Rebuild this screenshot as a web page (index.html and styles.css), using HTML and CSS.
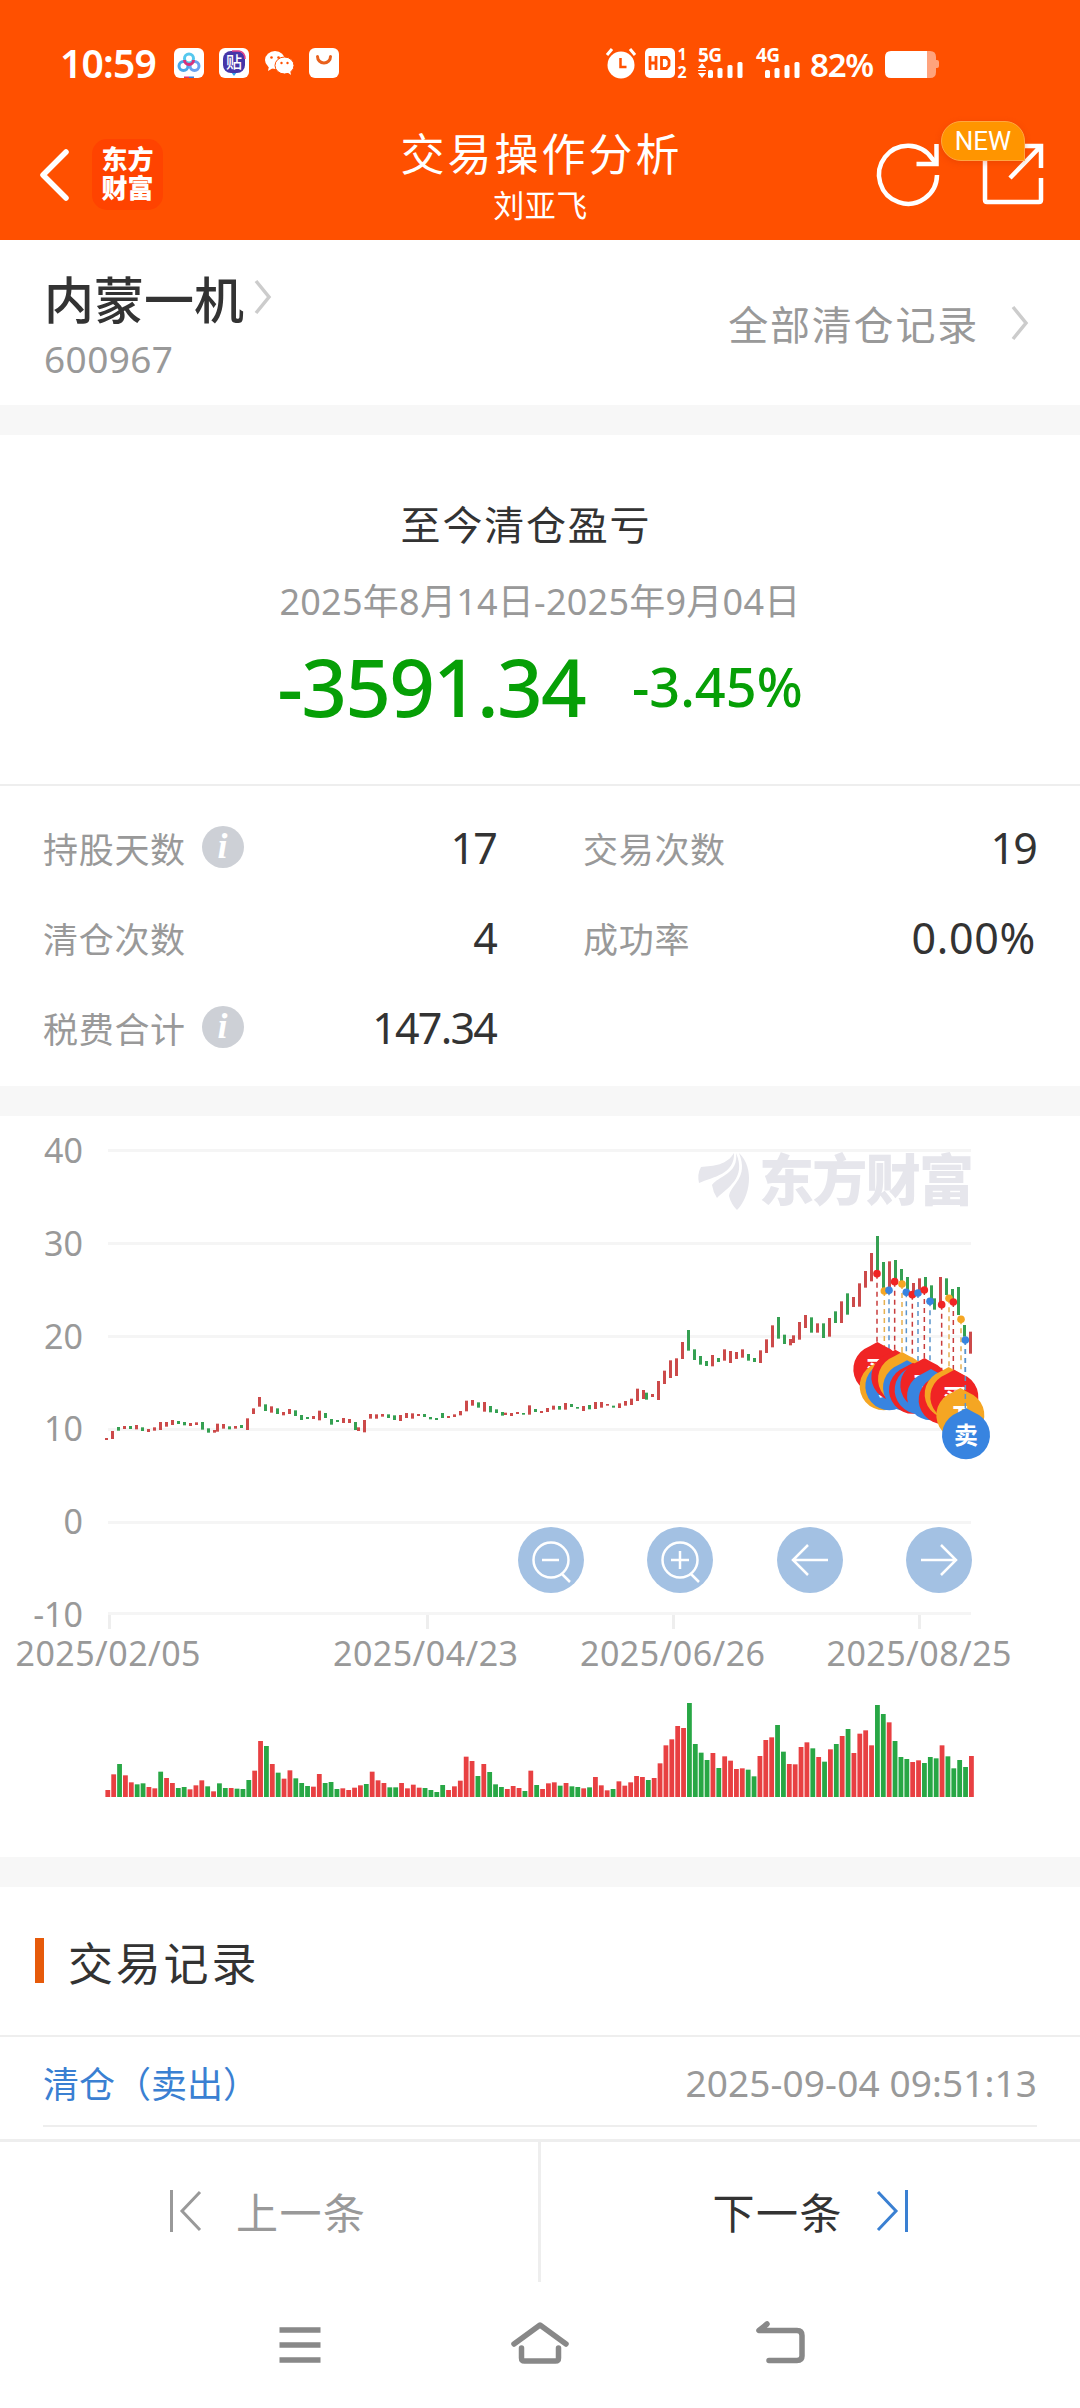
FILE: index.html
```
<!DOCTYPE html>
<html lang="zh-CN">
<head>
  <meta charset="UTF-8" />
  <meta name="viewport" content="width=device-width, initial-scale=1.0" />
  <title>交易操作分析</title>
  <link rel="stylesheet" href="styles.css">
</head>
<body>
  <header class="header">
    <div class="status">
      <span class="time">10:59</span>
      <svg class="apps" width="166" height="32" viewBox="0 0 166 32">
        <rect x="0" y="1" width="30" height="30" rx="6" fill="#fff"/>
        <g fill="none" stroke-width="3">
          <circle cx="9.500" cy="19" r="4.500" stroke="#4aa8e8"/>
          <circle cx="20.500" cy="19" r="4.500" stroke="#6aa2ee"/>
          <circle cx="15" cy="11.500" r="4.500" stroke="#55c8ee"/>
          <path d="M10.500 13a4.500 4.500 0 0 0 9 0" stroke="#d8327a"/>
        </g>
        <path d="M10 29.500h5v1.500h-5z" fill="#e0356a"/><path d="M15 29.500h5v1.500h-5z" fill="#3b7bd8"/>
        <rect x="45" y="1" width="30" height="30" rx="6" fill="#fff"/>
        <path d="M57 25h6l-3 4z" fill="#2da0ee"/>
        <rect x="49" y="4" width="22" height="22" rx="8" fill="#4636a8"/>
        <path d="M58 4h7q6 1 6 8" fill="none" stroke="#e0408a" stroke-width="1.500"/>
        <text x="60" y="20.500" class="tie">贴</text>
        <ellipse cx="101" cy="13" rx="10" ry="9" fill="#fff"/>
        <path d="M95 19l-1 5 5-3z" fill="#fff"/>
        <ellipse cx="110.500" cy="18.500" rx="9.500" ry="8.500" fill="#fff" stroke="#ff5000"/>
        <path d="M113 25l4 3-1-5z" fill="#fff"/>
        <g fill="#ff5000"><circle cx="97.500" cy="10.500" r="1.300"/><circle cx="104.500" cy="10.500" r="1.300"/><circle cx="107.500" cy="16" r="1.200"/><circle cx="113.500" cy="16" r="1.200"/></g>
        <rect x="135" y="1" width="30" height="30" rx="6" fill="#fff"/>
        <path d="M143.500 9.500a6.500 6.500 0 0 0 13 0" fill="none" stroke="#e8601c" stroke-width="3" stroke-linecap="round"/>
      </svg>
      <svg class="signals" width="200" height="32" viewBox="0 0 200 32">
        <g fill="#fff">
          <circle cx="15" cy="18" r="13.500"/>
          <path d="M1 8l5-6M29 8l-5-6" stroke="#fff" stroke-width="3"/>
          <path d="M14.500 11v9h6" fill="none" stroke="#ff5000" stroke-width="2.500"/>
          <rect x="39" y="1" width="30" height="30" rx="5"/>
          <path d="M44 9v14M50 9v14M44 16h6M55.500 10.500h5l2.500 3v5l-2.500 3h-5z" fill="none" stroke="#ff5000" stroke-width="2.800"/>
          <text x="76" y="13" class="sim">1</text>
          <text x="76" y="31" class="sim">2</text>
          <text x="92" y="15" class="net">5G</text>
          <path d="M96 16l4 5h-8zM96 31l-4-5h8z"/>
          <path d="M92 23.500h8" stroke="#fff"/>
          <rect x="102" y="23" width="5" height="8" rx="1.500"/><rect x="111.500" y="21" width="5" height="10" rx="1.500"/><rect x="121.500" y="18" width="5" height="13" rx="1.500"/><rect x="131.500" y="15" width="5" height="16" rx="1.500"/>
          <text x="150" y="15" class="net">4G</text>
          <rect x="159" y="23" width="5" height="8" rx="1.500"/><rect x="168.500" y="21" width="5" height="10" rx="1.500"/><rect x="178.500" y="18" width="5" height="13" rx="1.500"/><rect x="188.500" y="15" width="5" height="16" rx="1.500"/>
        </g>
      </svg>
      <span class="percent">82%</span>
      <svg width="54" height="32" viewBox="0 0 54 32">
        <path d="M42 4h3q6 0 6 6v3h1q2 0 2 2v4q0 2-2 2h-1v4q0 6-6 6h-3z" fill="#ffa37c"/>
        <path d="M42 4H6Q0 4 0 10v15q0 6 6 6h36z" fill="#fff"/>
      </svg>
    </div>

    <div class="nav">
      <div class="nav-side">
        <svg width="32" height="54" viewBox="0 0 32 54"><path d="M28 4L5 27l23 23" fill="none" stroke="#fff" stroke-width="5.500" stroke-linecap="round" stroke-linejoin="round"/></svg>
        <div class="logo">东方<br>财富</div>
      </div>
      <div class="nav-title">
        <h1>交易操作分析</h1>
        <p>刘亚飞</p>
      </div>
      <div class="nav-side nav-right">
        <svg width="66" height="66" viewBox="0 0 66 66" fill="none" stroke="#fff" stroke-width="4.500"><path d="M62 34A29 29 0 1 1 57 17.500L61 22"/><path d="M61.500 3v20H41.500"/></svg>
        <div class="share">
          <svg width="64" height="64" viewBox="0 0 64 64" fill="none" stroke="#fff" stroke-width="4.500"><path d="M28 4H4v54q0 2 2 2h52q2 0 2-2V36"/><path d="M42 4h18v22M59 5L29 36"/></svg>
          <span class="badge">NEW</span>
        </div>
      </div>
    </div>
  </header>

  <section class="stock">
    <div>
      <div class="stock-name">内蒙一机<svg width="20" height="38" viewBox="0 0 20 38"><path d="M3 3l13 16L3 35" fill="none" stroke="#ccc" stroke-width="3.500"/></svg></div>
      <div class="stock-code">600967</div>
    </div>
    <div class="all-records">全部清仓记录<svg width="20" height="38" viewBox="0 0 20 38"><path d="M3 3l13 16L3 35" fill="none" stroke="#ccc" stroke-width="3.500"/></svg></div>
  </section>

  <section class="profit">
    <h2>至今清仓盈亏</h2>
    <p class="range">2025年8月14日-2025年9月04日</p>
    <div class="amount"><span class="money">-3591.34</span><span class="rate">-3.45%</span></div>
  </section>

  <section class="stats">
    <div class="stat"><span>持股天数</span><i class="info">i</i><b>17</b></div>
    <div class="stat"><span>交易次数</span><b>19</b></div>
    <div class="stat"><span>清仓次数</span><b>4</b></div>
    <div class="stat"><span>成功率</span><b class="ratio">0.00%</b></div>
    <div class="stat"><span>税费合计</span><i class="info">i</i><b>147.34</b></div>
  </section>

  <section class="chart">
    <svg id="chart" width="1080" height="741" viewBox="0 0 1080 741">
      <g class="grid"><path d="M108 34.500h863M108 127.500h863M108 220.500h863M108 313.500h863M108 406.500h863M108 497.500h863"/></g>
      <path class="ticks" d="M109.500 499v14M427.500 499v14M673.500 499v14M919.500 499v14"/>
      <g class="axis axis-y">
        <text x="83" y="47">40</text>
        <text x="83" y="140">30</text>
        <text x="83" y="233">20</text>
        <text x="83" y="325">10</text>
        <text x="83" y="418">0</text>
        <text x="83" y="511">-10</text>
      </g>
      <g class="axis axis-x">
        <text x="108" y="550" textLength="185">2025/02/05</text>
        <text x="425.500" y="550" textLength="185">2025/04/23</text>
        <text x="672.500" y="550" textLength="185">2025/06/26</text>
        <text x="919" y="550" textLength="185">2025/08/25</text>
      </g>
      <g class="watermark">
        <path d="M734 37C727 49 714 50 701 51Q697 58 699 67C713 61 735 58 734 37z"/>
        <path d="M736 37C739 58 718 60 712 69Q713 76 717 82C727 72 747 62 736 37z"/>
        <path d="M739 37C749 62 731 68 729 80Q731 88 737 94C750 81 755 52 739 37z"/>
        <text x="759" y="84" textLength="215">东方财富</text>
      </g>
      <g id="candles"></g>
      <g id="volumes"></g>
      <g id="marks"></g>
      <g class="tools">
        <circle cx="551" cy="444" r="33"/><circle cx="680" cy="444" r="33"/><circle cx="810" cy="444" r="33"/><circle cx="939" cy="444" r="33"/>
        <path d="M568.500 444a17.500 17.500 0 1 1-35 0a17.500 17.500 0 1 1 35 0M542 444h17M562 458l8 8"/>
        <path d="M697.500 444a17.500 17.500 0 1 1-35 0a17.500 17.500 0 1 1 35 0M671 444h18M680 435v18M691 458l8 8"/>
        <path d="M828 444h-34M808 429l-15 15 15 15"/>
        <path d="M921 444h34M941 429l15 15-15 15"/>
      </g>
    </svg>
  </section>

  <section class="records">
    <h2>交易记录</h2>
    <div class="record"><a>清仓（卖出）</a><time>2025-09-04 09:51:13</time></div>
  </section>

  <footer>
    <div class="pager">
      <div class="prev"><svg width="34" height="44" viewBox="0 0 34 44"><path d="M3.500 1v42M32 3L14 22l18 19" fill="none" stroke="#999" stroke-width="3"/></svg><span>上一条</span></div>
      <div class="next"><span>下一条</span><svg width="34" height="44" viewBox="0 0 34 44"><path d="M30.500 1v42M2 3l18 19L2 41" fill="none" stroke="#3a80d2" stroke-width="3"/></svg></div>
    </div>
    <div class="keys">
      <svg width="60" height="50" viewBox="0 0 60 50"><path d="M9.500 10h41M9.500 25h41M9.500 40h41" /></svg>
      <svg width="60" height="50" viewBox="0 0 60 50"><path d="M4 24L30 5l26 19M11.500 28v10q0 3 3 3h31q3 0 3-3V28"/></svg>
      <svg width="60" height="50" viewBox="0 0 60 50"><path d="M17 4L9 10.500h38q5 0 5 5V36q0 4.500-5 4.500H19"/></svg>
    </div>
  </footer>

  <script src="chart.js"></script>
</body>
</html>
```

FILE: styles.css
```
* {
  box-sizing: border-box;
}
body {
  margin: 0;
  width: 1080px;
  height: 2408px;
  overflow: hidden;
  display: flex;
  flex-direction: column;
  background: #fff;
  color: #333;
  font-family: "Noto Sans", "Noto Sans CJK SC", sans-serif;
}
h1, h2, p {
  margin: 0;
  font-weight: 400;
}
svg {
  display: block;
  flex: none;
  overflow: visible;
}

.header {
  height: 240px;
  background: #ff5000;
  color: #fff;
}
.status {
  display: flex;
  align-items: center;
  height: 95px;
  padding: 31px 0 0 60px;
}
.time {
  width: 114px;
  font-size: 39px;
  font-weight: 600;
  letter-spacing: -0.8px;
  line-height: 60px;
}
.signals {
  margin-left: 266px;
}
.percent {
  width: 79px;
  padding: 4px 0 0 4px;
  font-size: 33px;
  font-weight: 600;
  letter-spacing: -1.2px;
  line-height: 60px;
}
.tie {
  font: 500 16px "Noto Sans CJK SC", sans-serif;
  fill: #fff;
  text-anchor: middle;
}
.sim {
  font: 700 16px "Noto Sans", sans-serif;
  text-anchor: middle;
}
.net {
  font: 700 19px "Noto Sans", sans-serif;
  letter-spacing: -0.5px;
}

.nav {
  display: flex;
  justify-content: space-between;
  height: 145px;
  padding: 26px 35px 0 38px;
}
.nav-side {
  display: flex;
  width: 240px;
  padding-top: 18px;
}
.nav-side > svg {
  margin-top: 9px;
}
.logo {
  width: 71px;
  height: 71px;
  margin-left: 22px;
  padding-top: 6px;
  border-radius: 15px;
  background: #ff4300;
  font-size: 26px;
  font-weight: 900;
  line-height: 29px;
  text-align: center;
}
.nav-title {
  text-align: center;
}
.nav-title h1 {
  padding-top: 4px;
  font-size: 44px;
  letter-spacing: 3px;
  line-height: 58px;
}
.nav-title p {
  padding: 1px 2px 0 0;
  font-size: 31px;
  letter-spacing: 0.5px;
  line-height: 43px;
}
.nav-right {
  justify-content: flex-end;
}
.nav-right > svg {
  margin-top: 2px;
}
.share {
  position: relative;
  margin: 3px 0 0 40px;
}
.badge {
  position: absolute;
  left: -40px;
  top: -21px;
  width: 84px;
  height: 40px;
  border: 1px solid #ffa640;
  border-radius: 20px 20px 0 20px;
  background: #ff9500;
  font: 26px/38px Roboto, sans-serif;
  text-align: center;
  box-shadow: 0 2px 6px rgba(200, 50, 0, 0.3);
}

.stock {
  display: flex;
  justify-content: space-between;
  height: 195px;
  padding: 27px 50px 0 44px;
  border-bottom: 30px solid #f7f7f7;
}
.stock-name {
  display: flex;
  align-items: center;
  font-size: 50px;
  font-weight: 500;
  line-height: 66px;
}
.stock-name svg {
  margin: -6px 0 0 9px;
}
.stock-code {
  font-size: 37px;
  letter-spacing: 0.4px;
  line-height: 51px;
  color: #999;
}
.all-records {
  display: flex;
  align-items: center;
  height: 112px;
  font-size: 40px;
  letter-spacing: 1.8px;
  color: #999;
}
.all-records svg {
  margin-left: 31px;
}

.profit {
  height: 351px;
  padding-top: 60px;
  border-bottom: 2px solid #eee;
  text-align: center;
}
.profit h2 {
  padding-right: 28px;
  font-size: 40px;
  letter-spacing: 1.8px;
  line-height: 60px;
}
.range {
  padding-top: 22px;
  font-size: 36px;
  letter-spacing: 0.25px;
  line-height: 50px;
  color: #999;
}
.amount {
  display: flex;
  justify-content: center;
  align-items: center;
  height: 117px;
  color: #069f06;
  font-weight: 500;
}
.money {
  font-size: 80px;
  letter-spacing: -1.8px;
}
.rate {
  margin-left: 47px;
  font-size: 54px;
}

.stats {
  display: grid;
  grid-template-columns: 452px 452px;
  grid-auto-rows: 90px;
  column-gap: 88px;
  height: 330px;
  padding: 16px 0 0 43px;
  border-bottom: 30px solid #f7f7f7;
}
.stat {
  display: flex;
  align-items: center;
  height: 90px;
  font-size: 35px;
  letter-spacing: 0.7px;
  color: #999;
}
.stat b {
  margin: 1px -1px 0 auto;
  font-size: 43px;
  font-weight: 400;
  letter-spacing: -1.8px;
  color: #333;
}
.stat .ratio {
  letter-spacing: 0.7px;
}
.info {
  width: 42px;
  height: 42px;
  margin: -1px 0 0 16px;
  border-radius: 50%;
  background: #cdd0d6;
  color: #fff;
  font: italic bold 36px/41px "Liberation Serif", serif;
  text-align: center;
}

.chart {
  height: 771px;
  border-bottom: 30px solid #f7f7f7;
}
.grid {
  stroke: #f5f5f5;
  stroke-width: 3;
}
.ticks {
  stroke: #eee;
  stroke-width: 3;
}
.axis {
  font-size: 34px;
  fill: #999;
}
.axis-y {
  text-anchor: end;
}
.axis-x {
  text-anchor: middle;
}
.watermark {
  fill: #e6e6ec;
  font-size: 55px;
  font-weight: 900;
}
.dash {
  stroke-width: 1.5;
  stroke-dasharray: 5 4;
}
.pin {
  font: 700 24px "Noto Sans CJK SC", sans-serif;
  fill: #fff;
  text-anchor: middle;
}
.tools circle {
  fill: #a3c1e3;
}
.tools path {
  fill: none;
  stroke: #fff;
  stroke-width: 2.5;
}

.records h2 {
  display: flex;
  align-items: center;
  height: 150px;
  border-bottom: 2px solid #eee;
  padding-left: 35px;
  font-size: 45px;
  letter-spacing: 2.8px;
}
.records h2::before {
  content: "";
  width: 9px;
  height: 45px;
  margin: -1px 24px 0 0;
  background: #e65a0a;
}
.record {
  display: flex;
  justify-content: space-between;
  align-items: center;
  height: 90px;
  margin: 0 43px;
  padding-top: 2px;
  border-bottom: 2px solid #eee;
  font-size: 36px;
  color: #3a80d2;
}
.record time {
  font-size: 37px;
  letter-spacing: 0.1px;
  color: #999;
}

footer {
  margin-top: 12px;
  border-top: 3px solid #eee;
}
.pager {
  display: flex;
  height: 140px;
  font-size: 42px;
  letter-spacing: 1.5px;
}
.pager div {
  display: flex;
  align-items: center;
  width: 541px;
  padding-bottom: 2px;
}
.pager span {
  margin-top: -2px;
}
.pager .prev {
  gap: 34px;
  width: 542px;
  padding-left: 168px;
  border-right: 3px solid #eee;
  color: #999;
}
.pager .next {
  gap: 33px;
  padding-left: 172px;
}
.keys {
  display: flex;
  justify-content: center;
  gap: 180px;
  padding: 38px 0 20px;
}
.keys path {
  fill: none;
  stroke: #888;
  stroke-width: 5.5;
  stroke-linecap: round;
  stroke-linejoin: round;
}
.keys svg:first-child path {
  stroke-linecap: butt;
}
```

FILE: chart.js
```
const RED = "#cc4a4a";
const GREEN = "#35a052";

// colour, high, low (in thirds of a pixel from the top grid area)
const candles = `r894-900 r873-897 g861-872 r858-867 g858-867 r855-868 g862-873 r867-876 r862-872 r846-870 r846-860 r840-855
g843-852 g846-856 r849-858 r847-855 g846-869 g865-878 r870-878 r851-875 r852-866 g859-868 r858-866 g855-864 r835-870
r805-822 r771-800 g793-813 r799-818 g805-822 r816-826 r807-822 g811-828 g825-840 g831-837 r828-837 r812-841 g819-834
g837-854 g840-846 r834-849 r837-849 g846-870 r862-873 r840-877 r822-836 r823-836 r822-830 g823-834 g826-840 r825-843
r819-834 r820-836 r822-828 g822-831 g831-838 g834-840 g819-834 r828-834 r823-831 r813-826 r782-814 r780-797 g787-803
r786-815 g798-817 g808-819 g816-827 r818-825 r819-828 r816-822 g819-824 r796-824 g807-816 r813-819 r804-816 r797-809
g798-809 r789-809 g792-801 g801-806 r798-813 g795-808 r786-807 r786-803 r792-797 g797-803 r790-804 r783-797 r776-795
r746-783 r750-777 g758-779 r762-771 r723-780 r692-732 r661-714 r655-708 r606-657 g570-632 g628-660 g648-674 g663-678
r645-679 g654-666 r628-662 r633-669 r636-657 r628-653 g642-662 g654-666 r631-669 r598-639 r556-622 g531-596 g584-612
r597-616 r586-609 r546-599 r525-564 g532-578 r550-578 g550-594 r534-590 g514-549 r484-549 g460-524 r471-501 r430-500
r393-443 r339-424 g288-392 g366-450 r364-445 g360-425 g387-430 g411-455 r429-465 r415-462 g411-445 g436-485 g475-509
r411-490 g415-465 g447-490 g441-525 g555-590 r575-641`.split(/\s+/);

const volumes = `r21 r68 g99 r65 r44 g38 g41 r30 r26 g76 r57 r42 g27 g30 r23 r35 r50 g32 r17 g41 g27 r27 g25 g24 g51 r79
r168 g153 r99 g73 r55 r80 g56 g42 g33 r31 r69 g42 g45 g24 r26 r21 r28 r35 g39 r76 r50 r42 g29 g29 r42 r26 r37 r28 g27
g21 g15 g36 r21 r32 r49 r121 r108 g63 r99 g75 g38 g30 r24 r33 r27 g18 r79 g36 r24 r41 r44 g34 r42 g32 g30 r26 g29 r60
r35 r20 g24 r47 r34 r44 r63 r60 g51 r57 r101 r155 r173 r213 r207 g282 g159 g133 g111 r132 g87 r122 r109 r84 r86 g82 g62
r123 r171 r179 g216 g136 r99 r98 r150 r164 g146 r120 g106 r143 g159 r183 g204 r132 r190 r200 r155 g276 g249 r224 g168
g120 g114 r105 r110 g102 g120 g116 r155 g122 g86 g111 g90 r123`.split(/\s+/);

// type, dot x, dot y, pin x, pin y
const marks = [
  ["r", 1131, 401, 1132, 687], ["o", 1153, 453, 1151, 738], ["b", 1167, 451, 1168, 738],
  ["r", 1184, 425, 1186, 710], ["o", 1206, 432, 1206, 717], ["b", 1219, 457, 1221, 742],
  ["r", 1237, 464, 1239, 749], ["b", 1254, 459, 1256, 749], ["r", 1273, 450, 1273, 735],
  ["b", 1290, 484, 1293, 768], ["r", 1325, 494, 1328, 779], ["o", 1347, 475, 1346, 762],
  ["r", 1360, 486, 1363, 770], ["o", 1383, 538, 1381, 825], ["b", 1396, 600, 1398, 885]
];
const types = {
  r: { color: "#f02424", line: "#c83c3c", label: "买" },
  o: { color: "#f5a623", line: "#e6b050", label: "T" },
  b: { color: "#3884e0", line: "#5a94cc", label: "卖" }
};

document.getElementById("candles").innerHTML = candles.map((c, i) => {
  const [top, bottom] = c.slice(1).split("-").map(Number);
  const x = 105 + 3 * (2 * i - Math.floor((i + 6) / 24.5));
  return `<rect x="${x}" y="${24 + top / 3}" width="3" height="${(bottom - top) / 3}" fill="${c[0] === "r" ? RED : GREEN}"/>`;
}).join("");

document.getElementById("volumes").innerHTML = volumes.map((v, i) => {
  const h = v.slice(1) / 3;
  return `<rect x="${105.4 + i * 5.875}" y="${681 - h}" width="4.8" height="${h}" fill="${v[0] === "r" ? "#e84042" : "#28a745"}"/>`;
}).join("");

const px = v => 500 + v / 3;
const py = v => 24 + v / 3;

const pins = marks.map(([t, , , x, y]) => {
  const { color, label } = types[t];
  return `<g transform="translate(${px(x)} ${py(y)})"><path d="M0-27Q7-23 13-20A24 24 0 1 1-13-20Q-7-23 0-27z" fill="${color}"/><text class="pin" y="9">${label}</text></g>`;
}).join("");

const lines = marks.map(([t, x, y, , pinY], i) => {
  const end = i === marks.length - 1 ? pinY - 80 : Math.min(pinY - 60, 690);
  return `<path class="dash" d="M${px(x)} ${py(y)}V${py(end)}" stroke="${types[t].line}"/>`;
});

const dots = marks.map(([t, x, y]) =>
  `<circle cx="${px(x)}" cy="${py(y)}" r="3.8" fill="${types[t].color}"/>`).join("");

document.getElementById("marks").innerHTML = lines.join("") + pins + lines[lines.length - 1] + dots;
```
